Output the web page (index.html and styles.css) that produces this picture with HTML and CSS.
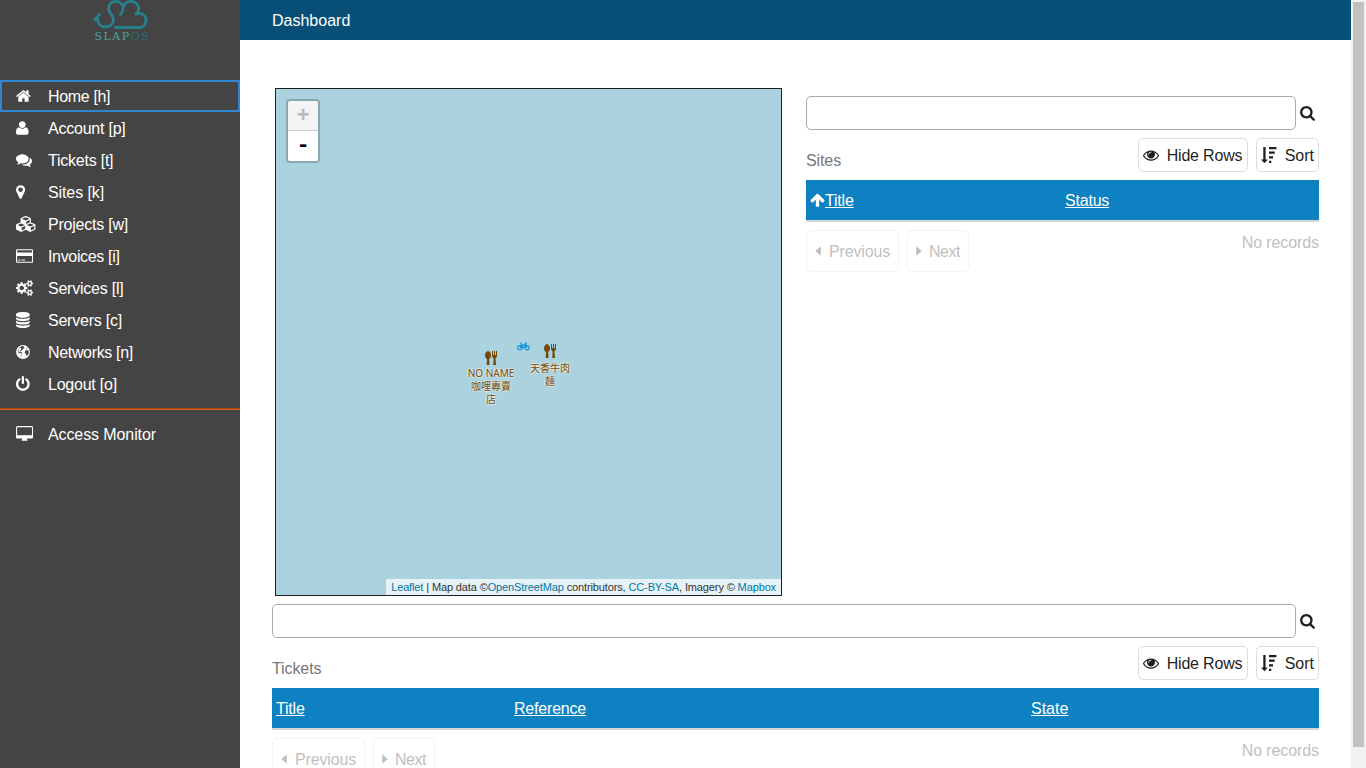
FILE: index.html
```html
<!DOCTYPE html>
<html lang="en">
<head>
<meta charset="utf-8">
<title>Dashboard</title>
<link rel="stylesheet" href="styles.css">
</head>
<body>
<svg class="defs" width="0" height="0" aria-hidden="true">
  <symbol id="search" viewBox="64 128 1664 1792"><path d="M1216 832q0-185-131.500-316.500t-316.500-131.500-316.500 131.500-131.500 316.500 131.500 316.500 316.500 131.500 316.500-131.500 131.500-316.500zm512 832q0 52-38 90t-90 38q-54 0-90-38l-343-342q-179 124-399 124-143 0-273.500-55.500t-225-150-150-225-55.500-273.500 55.500-273.500 150-225 225-150 273.500-55.500 273.500 55.500 225 150 150 225 55.500 273.500q0 220-124 399l343 343q37 37 37 90z"/></symbol>
  <symbol id="eye" viewBox="0 0 1792 1792"><path d="M1664 960q-152-236-381-353 61 104 61 225 0 185-131.500 316.500t-316.500 131.500-316.500-131.500-131.500-316.500q0-121 61-225-229 117-381 353 133 205 333.500 326.500t434.500 121.500 434.500-121.500 333.500-326.500zm-720-384q0-20-14-34t-34-14q-125 0-214.500 89.500t-89.500 214.500q0 20 14 34t34 14 34-14 14-34q0-86 61-147t147-61q20 0 34-14t14-34zm848 384q0 34-20 69-140 230-376.500 368.500t-499.500 138.500-499.500-139-376.500-368q-20-35-20-69t20-69q140-229 376.500-368t499.500-139 499.500 139 376.500 368q20 35 20 69z"/></symbol>
  <symbol id="sort" viewBox="0 0 1792 1792"><path d="M736 1440q0 12-10 24l-319 319q-10 9-23 9-12 0-23-9l-320-320q-15-16-7-35 8-20 30-20h192v-1376q0-14 9-23t23-9h192q14 0 23 9t9 23v1376h192q14 0 23 9t9 23zM896 0h832v256h-832zM896 512h640v256h-640zM896 1024h448v256h-448zM896 1536h256v256h-256z"/></symbol>
</svg>
<div class="app">
  <nav class="panel">
    <div class="logo">
      <svg width="60" height="46" viewBox="0 0 60 46">
        <g fill="none" stroke="#27818c" stroke-width="2.800" stroke-linecap="round" stroke-linejoin="round">
          <path d="M1.600 20 6.500 14.500M4.500 17.500C4.500 24 8 27 12.500 27C17 27 20.500 24 20.500 19.500C20.500 15 15.500 13 15.500 8.500C15.500 4 19 1.400 22.500 1.400C27 1.400 30 4.500 30 8.500C30 11 29 13 27.500 14.500"/>
          <path d="M30 7.500C31 4 34 1.400 38 1.400C43 1.400 46.500 5.500 45.500 10.500L43 14C49 12 53 15.500 53 20C53 24.500 50.500 27.500 46 27.500H22.500"/>
        </g>
        <text x="1.500" y="40" class="logo-text" textLength="54"><tspan fill="#4fa3a0">SLAP</tspan><tspan fill="#2c6d75">OS</tspan></text>
      </svg>
    </div>
    <ul class="menu">
      <li class="active"><svg width="14.860" height="16" viewBox="64 0 1664 1792"><path d="M1472 992v480q0 26-19 45t-45 19h-384v-384h-256v384h-384q-26 0-45-19t-19-45v-480q0-1 .5-3t.5-3l575-474 575 474q1 2 1 6zm223-69l-62 74q-8 9-21 11h-3q-13 0-21-7l-692-577-692 577q-12 8-24 7-13-2-21-11l-62-74q-8-10-7-23.500t11-21.500l719-599q32-26 76-26t76 26l244 204v-195q0-14 9-23t23-9h192q14 0 23 9t9 23v408l219 182q10 8 11 21.500t-7 23.500z"/></svg><a class="tight">Home [h]</a></li>
      <li><svg width="12.570" height="16" viewBox="192 0 1408 1792"><path d="M1600 1405q0 120-73 189.500t-194 69.500h-874q-121 0-194-69.500t-73-189.500q0-53 3.500-103.500t14-109 26.500-108.500 43-97.500 62-81 85.500-53.500 111.500-20q9 0 42 21.500t74.500 48 108 48 133.500 21.500 133.500-21.500 108-48 74.500-48 42-21.500q61 0 111.500 20t85.500 53.500 62 81 43 97.500 26.500 108.500 14 109 3.500 103.500zm-320-893q0 159-112.500 271.500t-271.500 112.500-271.500-112.500-112.500-271.500 112.500-271.500 271.500-112.500 271.500 112.500 112.500 271.500z"/></svg><a>Account [p]</a></li>
      <li><svg width="16" height="16" viewBox="0 0 1792 1792"><path d="M1408 768q0 139-94 257t-256.500 186.500-353.500 68.500q-86 0-176-16-124 88-278 128-36 9-86 16h-3q-11 0-20.500-8t-11.500-21q-1-3-1-6.500t.5-6.500 2-6l2.500-5 3.500-5.500 4-5 4.500-5 4-4.500q5-6 23-25t26-29.500 22.500-29 25-38.500 20.500-44q-124-72-195-177t-71-224q0-139 94-257t256.500-186.500 353.500-68.500 353.500 68.500 256.500 186.500 94 257zm384 256q0 120-71 224.500t-195 176.500q10 24 20.500 44t25 38.500 22.500 29 26 29.500 23 25q1 1 4 4.500t4.500 5 4 5 3.500 5.500l2.500 5 2 6 .5 6.500-1 6.500q-3 14-13 22t-22 7q-50-7-86-16-154-40-278-128-90 16-176 16-271 0-472-132 58 4 88 4 161 0 309-45t264-129q125-92 192-212t67-254q0-77-23-152 129 71 204 178t75 230z"/></svg><a>Tickets [t]</a></li>
      <li><svg width="9.140" height="16" viewBox="384 0 1024 1792"><path d="M1152 640q0-106-75-181t-181-75-181 75-75 181 75 181 181 75 181-75 75-181zm256 0q0 109-33 179l-364 774q-16 33-47.500 52t-67.500 19-67.500-19-46.500-52l-365-774q-33-70-33-179 0-212 150-362t362-150 362 150 150 362z"/></svg><a class="loose">Sites [k]</a></li>
      <li><svg width="20.570" height="16" viewBox="0 0 2304 1792"><path d="M640 1632l384-192v-314l-384 164v342zm-64-454l404-173-404-173-404 173zm1088 454l384-192v-314l-384 164v342zm-64-454l404-173-404-173-404 173zm-448-293l384-165v-266l-384 164v267zm-64-379l441-189-441-189-441 189zm1088 518v416q0 36-19 67t-52 47l-448 224q-25 14-57 14t-57-14l-448-224q-4-2-7-4-2 2-7 4l-448 224q-25 14-57 14t-57-14l-448-224q-33-16-52-47t-19-67v-416q0-38 21.500-70t56.500-48l434-186v-400q0-38 21.500-70t56.500-48l448-192q23-10 50-10t50 10l448 192q35 16 56.500 48t21.500 70v400l434 186q36 16 57 48t21 70z"/></svg><a>Projects [w]</a></li>
      <li><svg width="17.140" height="16" viewBox="0 0 1920 1792"><path d="M1760 128q66 0 113 47t47 113v1216q0 66-47 113t-113 47h-1600q-66 0-113-47t-47-113v-1216q0-66 47-113t113-47h1600zm-1600 128q-13 0-22.500 9.500t-9.500 22.500v224h1664v-224q0-13-9.500-22.500t-22.500-9.500h-1600zm1600 1280q13 0 22.500-9.500t9.500-22.500v-608h-1664v608q0 13 9.500 22.500t22.500 9.500h1600zm-1504-128v-128h256v128h-256zm384 0v-128h384v128h-384z"/></svg><a class="tight">Invoices [i]</a></li>
      <li><svg width="17.140" height="16" viewBox="0 0 1920 1792"><path d="M896 896q0-106-75-181t-181-75-181 75-75 181 75 181 181 75 181-75 75-181zm768 512q0-52-38-90t-90-38-90 38-38 90q0 53 37.500 90.500t90.500 37.500 90.500-37.500 37.500-90.500zm0-1024q0-52-38-90t-90-38-90 38-38 90q0 53 37.500 90.500t90.500 37.500 90.500-37.500 37.500-90.500zm-384 421v185q0 10-7 19.500t-16 10.500l-155 24q-11 35-32 76 34 48 90 115 7 11 7 20 0 12-7 19-23 30-82.500 89.500t-78.500 59.500q-11 0-21-7l-115-90q-37 19-77 31-11 108-23 155-7 24-30 24h-186q-11 0-20-7.500t-10-17.500l-23-153q-34-10-75-31l-118 89q-7 7-20 7-11 0-21-8-144-133-144-160 0-9 7-19 10-14 41-53t47-61q-23-44-35-82l-152-24q-10-1-17-9.500t-7-19.500v-185q0-10 7-19.500t16-10.500l155-24q11-35 32-76-34-48-90-115-7-11-7-20 0-12 7-20 22-30 82-89t79-59q11 0 21 7l115 90q34-18 77-32 11-108 23-154 7-24 30-24h186q11 0 20 7.500t10 17.500l23 153q34 10 75 31l118-89q8-7 20-7 11 0 21 8 144 133 144 160 0 8-7 19-12 16-42 54t-45 60q23 48 34 82l152 23q10 2 17 10.500t7 19.500zm640 533v140q0 16-149 31-12 27-30 52 51 113 51 138 0 4-4 7-122 71-124 71-8 0-46-47t-52-68q-20 2-30 2t-30-2q-14 21-52 68t-46 47q-2 0-124-71-4-3-4-7 0-25 51-138-18-25-30-52-149-15-149-31v-140q0-16 149-31 13-29 30-52-51-113-51-138 0-4 4-7 4-2 35-20t59-34 30-16q8 0 46 46.500t52 67.500q20-2 30-2t30 2q51-71 92-112l6-2q4 0 124 70 4 3 4 7 0 25-51 138 17 23 30 52 149 15 149 31zm0-1024v140q0 16-149 31-12 27-30 52 51 113 51 138 0 4-4 7-122 71-124 71-8 0-46-47t-52-68q-20 2-30 2t-30-2q-14 21-52 68t-46 47q-2 0-124-71-4-3-4-7 0-25 51-138-18-25-30-52-149-15-149-31v-140q0-16 149-31 13-29 30-52-51-113-51-138 0-4 4-7 4-2 35-20t59-34 30-16q8 0 46 46.500t52 67.500q20-2 30-2t30 2q51-71 92-112l6-2q4 0 124 70 4 3 4 7 0 25-51 138 17 23 30 52 149 15 149 31z"/></svg><a>Services [l]</a></li>
      <li><svg width="13.710" height="16" viewBox="128 0 1536 1792"><path d="M896 768q237 0 443-43t325-127v170q0 69-103 128t-280 93.500-385 34.500-385-34.500-280-93.500-103-128v-170q119 84 325 127t443 43zm0 768q237 0 443-43t325-127v170q0 69-103 128t-280 93.500-385 34.500-385-34.500-280-93.500-103-128v-170q119 84 325 127t443 43zm0-384q237 0 443-43t325-127v170q0 69-103 128t-280 93.500-385 34.500-385-34.500-280-93.500-103-128v-170q119 84 325 127t443 43zm0-1152q208 0 385 34.500t280 93.500 103 128v128q0 69-103 128t-280 93.500-385 34.500-385-34.500-280-93.500-103-128v-128q0-69 103-128t280-93.500 385-34.500z"/></svg><a>Servers [c]</a></li>
      <li><svg width="14" height="16" viewBox="0 0 14 16"><circle cx="7" cy="8" r="6.900"/><path fill="#444" d="M5.300 2.300 8 1.900 7.300 3.200 8.700 3.800 6.800 5.200 5.700 6.600 4.200 7.600 5.500 8.300 6.400 9.600 5.600 11.800 4.700 13.200 4 10.500 2.600 8.700 2 6 3.500 3.500ZM9 7 10.800 6 12.600 6.500 12.800 9 11.600 11.500 10.500 11.800 10 9.800 8.700 9ZM10.400 3.500 11.600 4.800 10.300 5.200Z"/><path d="M2.400 5 4.800 3.400 5.300 5.200 4 6.800 4.300 8.200 2.800 7.600ZM3 9 5.400 9.200 5.900 10.300 4.900 12.600 3.800 12Z"/></svg><a class="tight">Networks [n]</a></li>
      <li><svg width="13.710" height="16" viewBox="128 0 1536 1792"><path d="M1664 896q0 156-61 298t-164 245-245 164-298 61-298-61-245-164-164-245-61-298q0-182 80.500-343t226.500-270q43-32 95.500-25t83.500 50q32 42 24.500 94.500t-49.500 84.500q-98 74-151.500 181t-53.500 228q0 104 40.500 198.500t109.500 163.500 163.500 109.500 198.500 40.500 198.500-40.500 163.500-109.500 109.500-163.500 40.500-198.500q0-121-53.500-228t-151.500-181q-42-32-49.500-84.500t24.500-94.500q31-43 84-50t95 25q146 109 226.500 270t80.500 343zm-640-768v640q0 52-38 90t-90 38-90-38-38-90v-640q0-52 38-90t90-38 90 38 38 90z"/></svg><a>Logout [o]</a></li>
    </ul>
    <ul class="menu extra">
      <li><svg width="17.140" height="16" viewBox="0 0 1920 1792"><path d="M1792 992v-832q0-13-9.500-22.500t-22.500-9.500h-1600q-13 0-22.500 9.500t-9.500 22.500v832q0 13 9.500 22.500t22.500 9.500h1600q13 0 22.500-9.500t9.500-22.500zm128-832v1088q0 66-47 113t-113 47h-544q0 37 16 77.500t32 71 16 43.500q0 26-19 45t-45 19h-512q-26 0-45-19t-19-45q0-14 16-44t32-70 16-78h-544q-66 0-113-47t-47-113v-1088q0-66 47-113t113-47h1600q66 0 113 47t47 113z"/></svg><a class="loose">Access Monitor</a></li>
    </ul>
  </nav>
  <div class="page">
    <header class="bar">Dashboard</header>
    <main class="content">
      <div class="top">
        <div class="map">
          <div class="zoom"><span class="in">+</span><span class="out">-</span></div>
          <svg class="bike" width="13" height="9" viewBox="0 0 14 9" stroke="#0e92da" stroke-width="1.100"><circle cx="3" cy="5.800" r="2.300"/><circle cx="10.800" cy="5.800" r="2.300"/><path d="M3 5.800 4.500 2.500H9.300L7 5.800H3M4.500 2.500 7 5.800M10.800 5.800 8.800.7H10.500M3.300 1H5.500"/></svg>
          <div class="poi poi-a"><svg width="12" height="14" viewBox="0 0 12 14"><path d="M3 0C4.800 0 6 2.300 6 4.500C6 6.500 5 7.500 4.200 8L4.500 14H1.700L2 8C1 7.500 0 6.500 0 4.500C0 2.300 1.200 0 3 0ZM7 0H8V4H9V0H10V4H11V0H12V5.500L10.500 7.500 11 14H8.300L8.600 7.500 7 5.500Z"/></svg>NO NAME<br>咖哩專賣<br>店</div>
          <div class="poi poi-b"><svg width="12" height="14" viewBox="0 0 12 14"><path d="M3 0C4.800 0 6 2.300 6 4.500C6 6.500 5 7.500 4.200 8L4.500 14H1.700L2 8C1 7.500 0 6.500 0 4.500C0 2.300 1.200 0 3 0ZM7 0H8V4H9V0H10V4H11V0H12V5.500L10.500 7.500 11 14H8.300L8.600 7.500 7 5.500Z"/></svg>天香牛肉<br>麵</div>
          <div class="attribution"><a>Leaflet</a> | Map data ©<a>OpenStreetMap</a> contributors, <a>CC-BY-SA</a>, Imagery © <a>Mapbox</a></div>
        </div>
        <section class="listbox sites">
          <div class="search"><input type="text"><svg width="15" height="16"><use href="#search"/></svg></div>
          <div class="caption"><h2>Sites</h2><button class="hide"><svg width="16" height="16"><use href="#eye"/></svg><span>Hide Rows</span></button><button><svg width="16" height="16"><use href="#sort"/></svg><span>Sort</span></button></div>
          <div class="thead"><span><svg width="15" height="16" viewBox="53 0 1686 1792"><path d="M1675 971q0 51-37 90l-75 75q-38 38-91 38-54 0-90-38l-294-293v704q0 52-37.500 84.500t-90.500 32.500h-128q-53 0-90.500-32.500t-37.500-84.500v-704l-294 293q-36 38-90 38t-90-38l-75-75q-38-38-38-90 0-53 38-91l651-651q35-37 90-37 54 0 91 37l651 651q37 39 37 91z"/></svg><a>Title</a></span><span><a>Status</a></span></div>
          <div class="pager"><button><svg width="6" height="10" viewBox="0 0 6 10"><path d="M5.800 .3V9.700L.2 5Z"/></svg><span>Previous</span></button><button class="next"><svg width="6" height="10" viewBox="0 0 6 10"><path d="M.2 .3V9.700L5.800 5Z"/></svg><span>Next</span></button><em>No records</em></div>
        </section>
      </div>
      <section class="listbox tickets">
        <div class="search"><input type="text"><svg width="15" height="16"><use href="#search"/></svg></div>
        <div class="caption"><h2>Tickets</h2><button class="hide"><svg width="16" height="16"><use href="#eye"/></svg><span>Hide Rows</span></button><button><svg width="16" height="16"><use href="#sort"/></svg><span>Sort</span></button></div>
        <div class="thead"><span><a>Title</a></span><span><a>Reference</a></span><span><a class="state">State</a></span></div>
        <div class="pager"><button><svg width="6" height="10" viewBox="0 0 6 10"><path d="M5.800 .3V9.700L.2 5Z"/></svg><span>Previous</span></button><button class="next"><svg width="6" height="10" viewBox="0 0 6 10"><path d="M.2 .3V9.700L5.800 5Z"/></svg><span>Next</span></button><em>No records</em></div>
      </section>
    </main>
  </div>
  <div class="scrollbar"><div class="thumb"></div></div>
</div>
</body>
</html>
```
FILE: styles.css
```css
* { box-sizing: border-box; }
body {
  margin: 0;
  height: 768px;
  overflow: hidden;
  font: 16px/24px "Liberation Sans", Arial, sans-serif;
  color: #1f1f1f;
  background: #fff;
}
.defs { display: block; }
svg { fill: currentColor; flex: none; }
.app { display: flex; height: 768px; overflow: hidden; }

.panel { width: 240px; flex: none; background: #444; color: #fff; }
.logo { height: 80px; padding-left: 93px; }
.logo svg { display: block; overflow: visible; }
.logo-text { font: 11px "DejaVu Serif", serif; }
.menu { list-style: none; margin: 0; padding: 0; }
.menu li { display: flex; align-items: center; height: 32px; padding-left: 16px; }
.menu li.active { outline: 2px solid #2f85cf; outline-offset: -2px; }
.menu svg { margin-right: auto; }
.menu a { width: 192px; padding-top: 2px; letter-spacing: -.23px; }
.menu a.tight { letter-spacing: -.34px; }
.menu a.loose { letter-spacing: -.1px; }
.extra { margin-top: 8px; border-top: 1px solid #a8450a; box-shadow: inset 0 1px #e0620f; padding-top: 9px; }

.page { flex: 1; min-width: 0; }
.bar { height: 40px; line-height: 42px; padding-left: 32px; background: #084f78; color: #fff; }
.content { padding: 48px 32px 0; }
.top { display: flex; justify-content: space-between; height: 508px; padding-left: 3px; }

.map { position: relative; width: 507px; height: 508px; border: 1px solid #1f1f1f; background: #aad3df; overflow: hidden; }
.zoom {
  position: absolute; left: 10px; top: 10px; width: 34px;
  border: 2px solid rgba(0,0,0,.2); border-radius: 4px; background-clip: padding-box;
  font: bold 22px/30px "Liberation Mono", monospace; text-align: center; overflow: hidden;
}
.zoom span { display: block; height: 30px; background: #fff; color: #000; }
.zoom .in { line-height: 31px; background: #f4f4f4; color: #bbb; border-bottom: 1px solid #ccc; }
.bike { position: absolute; left: 241px; top: 253px; fill: none; }
.poi {
  position: absolute; width: 60px; text-align: center; color: #734a08;
  font: 10px/13px "Noto Sans", "Noto Sans CJK TC", sans-serif;
  text-shadow: 1px 0 1px #dfe9e8, -1px 0 1px #dfe9e8, 0 1px 1px #dfe9e8, 0 -1px 1px #dfe9e8;
}
.poi svg { display: block; margin: 0 auto 2px; }
.poi-a { left: 185px; top: 262px; }
.poi-b { left: 244px; top: 255px; }
.poi-b svg { margin-bottom: 4px; }
.attribution {
  position: absolute; right: 0; bottom: 0; padding: 0 5px; white-space: nowrap;
  font-size: 11px; line-height: 16px; letter-spacing: -.125px; color: #333; background: rgba(255,255,255,.7);
}
.attribution a { color: #0078a8; }

.sites { width: 513px; }
.listbox { padding-top: 8px; }
.search { display: flex; align-items: center; gap: 4px; height: 34px; padding-right: 4px; }
.search input { flex: 1; min-width: 0; height: 34px; margin: 0; border: 1px solid #aaa; border-radius: 5px; background: #fff; }
.search svg { margin-top: 2px; }
.caption { display: flex; gap: 8px; padding: 8px 0; }
.caption h2 { flex: 1; margin: 11px 0 -1px; font-size: 16px; font-weight: 400; line-height: 24px; letter-spacing: -.1px; color: #777; }
button { display: flex; align-items: center; gap: 8px; height: 34px; margin: 0; padding: 0 4px; border: 1px solid #ddd; border-radius: 5px; background: #fff; font: inherit; color: #1f1f1f; }
button span { padding-top: 2px; }
.hide { width: 110px; white-space: nowrap; letter-spacing: -.18px; }
.thead { display: grid; height: 42px; background: #0e81c2; border-bottom: 2px solid #d6d6d6; color: #fff; }
.sites .thead { grid-template-columns: 255px 1fr; }
.tickets .thead { grid-template-columns: 238px 517px 1fr; }
.thead span { display: flex; align-items: center; padding-left: 4px; }
.thead a { padding-top: 2px; letter-spacing: -.2px; text-decoration: underline; }
.thead a.state { letter-spacing: 0; }
.pager { display: flex; gap: 8px; padding-top: 8px; color: #bfbfbf; }
.pager button { width: 93px; height: 42px; padding: 0 8px; border-color: #f2f2f2; color: #bfbfbf; letter-spacing: -.15px; }
.pager .next { width: 62px; gap: 7px; letter-spacing: -.5px; }
.pager em { margin-left: auto; padding-top: 1px; font-style: normal; letter-spacing: -.1px; }

.scrollbar { width: 15px; flex: none; padding: 2px; background: #f1f1f1; }
.thumb { width: 11px; height: 745px; background: #c1c1c1; }
```
